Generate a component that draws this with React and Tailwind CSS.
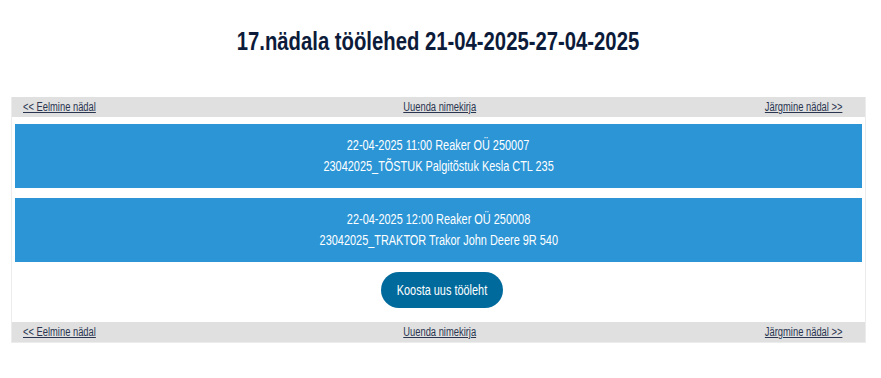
import React from "react";

const rows = [
  { line1: "22-04-2025 11:00 Reaker OÜ 250007", line2: "23042025_TÕSTUK Palgitõstuk Kesla CTL 235" },
  { line1: "22-04-2025 12:00 Reaker OÜ 250008", line2: "23042025_TRAKTOR Trakor John Deere 9R 540" },
];

// the page uses a narrow sans; no narrow face is installed, so squeeze Liberation Sans
function Narrow({ children, origin = "origin-center", className = "" }) {
  return (
    <span className={`inline-block whitespace-nowrap scale-x-[0.78] ${origin} ${className}`}>
      {children}
    </span>
  );
}

function NavBar() {
  return (
    <div className="flex items-center justify-between h-[20px] bg-[#e0e0e0] pl-[11px] pr-[23px] text-[12px] text-[#2a3550]">
      <a href="#">
        <Narrow origin="origin-left" className="underline">&lt;&lt; Eelmine nädal</Narrow>
      </a>
      <a href="#" className="ml-[20px]">
        <Narrow className="underline">Uuenda nimekirja</Narrow>
      </a>
      <a href="#">
        <Narrow origin="origin-right" className="underline">Järgmine nädal &gt;&gt;</Narrow>
      </a>
    </div>
  );
}

export default function App() {
  return (
    <div
      className="min-h-[378px] bg-white pt-[26px]"
      style={{ fontFamily: '"Liberation Sans", Arial, sans-serif' }}
    >
      <h1 className="text-center text-[26px] font-bold text-[#0d1b3a] leading-[30px] pr-[6px]">
        <Narrow>17.nädala töölehed 21-04-2025-27-04-2025</Narrow>
      </h1>
      <div className="mx-[11px] mt-[41px] w-[855px] border border-[#ececec] border-t-0">
        <NavBar />
        <div className="px-[3px] pt-[7px] pb-[14px] flex flex-col gap-[10px]">
          {rows.map((r, i) => (
            <div
              key={i}
              className="h-[64px] bg-[#2b95d6] text-white text-[14px] flex flex-col items-center justify-center gap-[4px] leading-[17px]"
            >
              <Narrow>{r.line1}</Narrow>
              <Narrow>{r.line2}</Narrow>
            </div>
          ))}
          <div className="flex justify-center pl-[6px]">
            <button className="w-[122px] h-[36px] rounded-full bg-[#006a9c] text-white text-[14px]">
              <Narrow>Koosta uus tööleht</Narrow>
            </button>
          </div>
        </div>
        <NavBar />
      </div>
    </div>
  );
}
